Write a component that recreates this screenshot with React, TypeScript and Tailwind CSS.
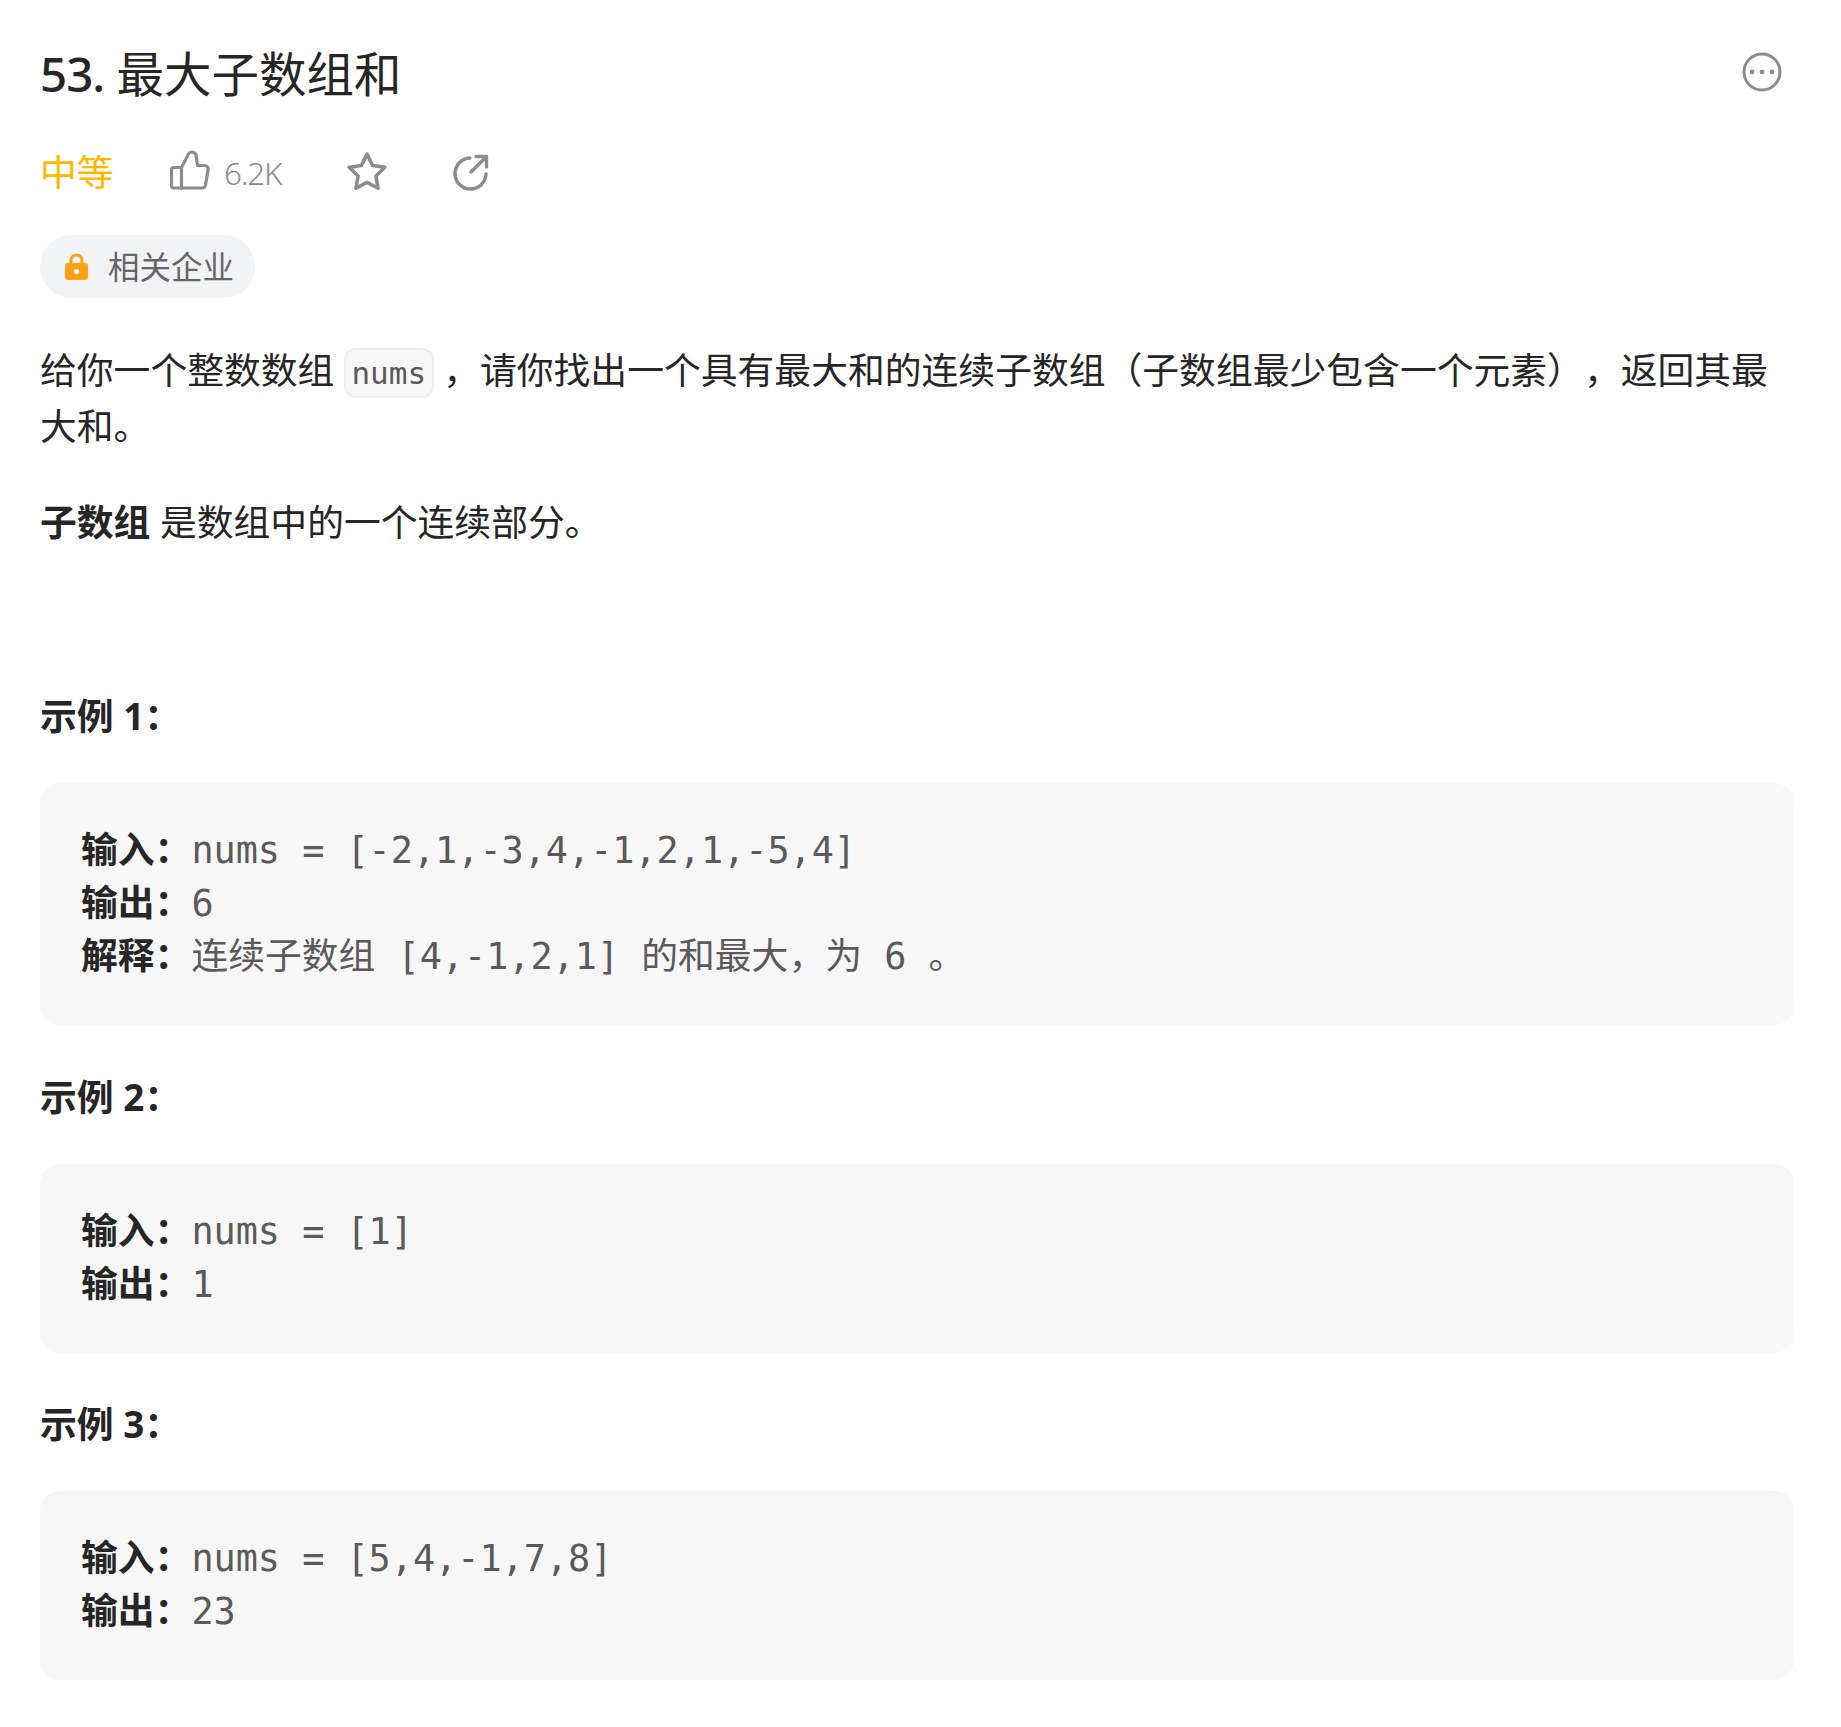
const sans = "font-['Noto_Sans','Noto_Sans_CJK_SC',sans-serif]";

function Label({ children }: { children: string }) {
  return <strong className="font-['Noto_Sans_CJK_SC',sans-serif] font-bold leading-none text-[#262626]">{children}</strong>;
}

function Example({ title, lines }: { title: string; lines: [string, string][] }) {
  return (
    <section>
      <h3 className="text-[36.8px] leading-[57px] font-bold text-[#262626]">{title}</h3>
      <pre className="mt-[38px] rounded-[20px] bg-[#f7f7f8] px-[41px] pt-[41px] pb-[42px] font-['DejaVu_Sans_Mono','Noto_Sans_CJK_SC',monospace] text-[36.8px] leading-[53px] text-[#5a5a5a]">
        {lines.map(([k, v], i) => (
          <div key={i}>
            <Label>{k}</Label>
            {v}
          </div>
        ))}
      </pre>
    </section>
  );
}

export default function App() {
  return (
    <div className={`${sans} min-h-[1727px] bg-white pl-[40px] pr-[47px] pt-[39px] text-[#262626] [text-spacing-trim:space-all]`}>
      <header className="flex items-start justify-between">
        <h1 className="text-[47.5px] leading-[70px] text-[#262626]">
          <span className="font-medium tracking-[-1px]">53.</span> 最大子数组和
        </h1>
        <svg className="mr-[12px] mt-[13px] h-[40px] w-[40px]" viewBox="0 0 40 40" fill="none">
          <circle cx="20" cy="20" r="18" stroke="#8c8c8c" strokeWidth="3" />
          <circle cx="10" cy="20" r="2.4" fill="#8c8c8c" />
          <circle cx="20" cy="20" r="2.4" fill="#8c8c8c" />
          <circle cx="30" cy="20" r="2.4" fill="#8c8c8c" />
        </svg>
      </header>

      <div className="mt-[36px] flex h-[56px] items-center">
        <span className="w-[130px] text-[36.8px] text-[#ffb800]">中等</span>
        <svg className="-mt-[6px] h-[42px] w-[40px]" viewBox="0 0 40 42" fill="none" stroke="#8c8c8c" strokeWidth="3.2" strokeLinejoin="round" strokeLinecap="round">
          <path d="M11.500 18.500L18.500 5c1.500-3 6.500-2.500 7.500 1l1.500 10.500h7c2.500 0 4 2 3.500 4.500l-2.500 15c-.4 2-1.500 3-3.500 3H4c-1.500 0-2.500-1-2.500-2.500V20.500c0-1.300.9-2 2.300-2h7.700v21" />
        </svg>
        <span className="ml-[14px] w-[60px] text-[31.5px] font-light tracking-[-1.2px] text-[#8c8c8c]">6.2K</span>
        <svg className="-mt-[2px] ml-[62px] h-[42px] w-[42px]" viewBox="0 0 40 40" fill="none" stroke="#8c8c8c" strokeWidth="3.400" strokeLinejoin="round">
          <path d="M20 3l5.300 10.800 11.700 1.700-8.500 8.300 2 11.700L20 29.900 9.500 35.500l2-11.700L3 15.500l11.700-1.700z" />
        </svg>
        <svg className="-mt-[2px] ml-[64px] h-[38px] w-[38px]" viewBox="0 0 38 38" fill="none" stroke="#8c8c8c" strokeWidth="3.400" strokeLinecap="round" strokeLinejoin="round">
          <path d="M18 5A15.500 15.500 0 1 0 34 21" />
          <path d="M19 19L34 4M24 3.500h10.500V14" />
        </svg>
      </div>

      <div className="mt-[34px] flex h-[63px] w-[215px] items-center rounded-full bg-[#f2f3f4] pl-[25px]">
        <svg className="h-[27px] w-[23px]" viewBox="0 0 23 27" fill="none">
          <path d="M6 12V7.500a5.500 5.500 0 0 1 11 0V12" stroke="#ffa116" strokeWidth="3" />
          <rect x="0" y="10" width="23" height="17" rx="3" fill="#ffa116" />
          <circle cx="11.500" cy="18.500" r="2.600" fill="#fff" />
        </svg>
        <span className="ml-[20px] text-[31.500px] text-[#666666]">相关企业</span>
      </div>

      <p className="mt-[44px] w-[1754px] text-[36.8px] leading-[56px]">
        给你一个整数数组{" "}
        <code className="rounded-[12px] border-2 border-[#eeeeee] bg-[#f7f7f8] px-[5.5px] py-[5px] font-['DejaVu_Sans_Mono',monospace] text-[31px] leading-none text-[#5a5a5a]">nums</code>
        {" "}，请你找出一个具有最大和的连续子数组（子数组最少包含一个元素），返回其最大和。
      </p>
      <p className="mt-[40px] text-[36.8px] leading-[56px]">
        <strong className="font-bold">子数组</strong> 是数组中的一个连续部分。
      </p>

      <div className="mt-[138px] flex w-[1754px] flex-col gap-[43.6px]">
        <Example
          title="示例 1："
          lines={[
            ["输入：", "nums = [-2,1,-3,4,-1,2,1,-5,4]"],
            ["输出：", "6"],
            ["解释：", "连续子数组 [4,-1,2,1] 的和最大，为 6 。"],
          ]}
        />
        <Example
          title="示例 2："
          lines={[
            ["输入：", "nums = [1]"],
            ["输出：", "1"],
          ]}
        />
        <Example
          title="示例 3："
          lines={[
            ["输入：", "nums = [5,4,-1,7,8]"],
            ["输出：", "23"],
          ]}
        />
      </div>
    </div>
  );
}
